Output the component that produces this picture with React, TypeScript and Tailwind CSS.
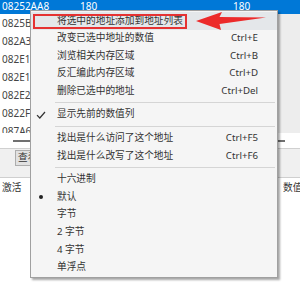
import React from 'react';

type Item =
  | { sep: true }
  | { sep?: false; label: string; keys?: string; active?: boolean; check?: boolean; radio?: boolean };

const items: Item[] = [
  { label: '将选中的地址添加到地址列表', active: true },
  { label: '改变已选中地址的数值', keys: 'Ctrl+E' },
  { label: '浏览相关内存区域', keys: 'Ctrl+B' },
  { label: '反汇编此内存区域', keys: 'Ctrl+D' },
  { label: '删除已选中的地址', keys: 'Ctrl+Del' },
  { sep: true },
  { label: '显示先前的数值列', check: true },
  { sep: true },
  { label: '找出是什么访问了这个地址', keys: 'Ctrl+F5' },
  { label: '找出是什么改写了这个地址', keys: 'Ctrl+F6' },
  { sep: true },
  { label: '十六进制' },
  { label: '默认', radio: true },
  { label: '字节' },
  { label: '2 字节' },
  { label: '4 字节' },
  { label: '单浮点' },
];

const rows = ['0825B9C0', '082A3F50', '082E1A08', '082E1A0C', '082E2B40', '0822F100', '087A6C48', '09A9D2E0'];

const ui = { fontFamily: '"Noto Sans", "Noto Sans CJK SC", sans-serif' };

export default function App() {
  return (
    <div className="relative w-[300px] h-[283px] overflow-hidden bg-white text-[#333]" style={ui}>
      {/* found addresses list */}
      <div className="h-[133px] overflow-hidden">
        <div className="-mt-[2px] text-[10px]">
          <div className="flex h-[16px] items-center bg-[#0078d7] text-white">
            <span className="pl-[2px] w-[80px]">08252AA8</span>
            <span className="w-[153px]">180</span>
            <span>180</span>
          </div>
          {rows.map((r) => (
            <div key={r} className="flex h-[18px] items-center">
              <span className="flex-1 pl-[2px] text-[#444]">{r}</span>
              <span className="w-[22px] h-full bg-[#ededed]" />
            </div>
          ))}
        </div>
      </div>

      {/* horizontal scrollbar */}
      <div className="h-[15px] pt-[7px]">
        <div className="ml-[13px] mr-[15px] h-[2px] bg-[#707070]" />
      </div>

      {/* button strip */}
      <div className="h-[29px] border-t border-[#d0d0d0] bg-[#f0f0f0] pt-[1px]">
        <div className="ml-[15px] w-[70px] h-[16px] overflow-hidden whitespace-nowrap border border-[#adadad] bg-[#e1e1e1] pl-[2px] text-[9.7px] leading-[14px]">
          查看内存
        </div>
      </div>

      {/* address list header */}
      <div className="flex h-[20px] items-center border-t border-[#cfcfcf] pt-[2px] text-[9.7px]">
        <span className="pl-[2px] flex-1 whitespace-nowrap">激活</span>
        <span className="w-[17px] overflow-hidden whitespace-nowrap">数值</span>
      </div>

      {/* context menu */}
      <div className="absolute left-[30px] top-[10px] w-[248px] border border-[#a0a0a0] bg-[#f5f5f5] py-[1px] shadow-[2px_2px_2px_rgba(0,0,0,0.35)] text-[9.7px] text-[#333]">
        {items.map((it, i) =>
          it.sep ? (
            <div key={i} className="my-[2.5px] ml-[24px] mr-[2px] h-px bg-[#d5d5d5]" />
          ) : (
            <div
              key={i}
              className={
                'flex h-[17.6px] items-center pr-[19px] ' + (it.active ? 'bg-[#e4e7ea]' : '')
              }
            >
              <span className="flex w-[19px] justify-center">
                {it.check && (
                  <svg width="10" height="8" viewBox="0 0 10 8">
                    <path d="M1 4.2 L3.8 7 L9 1" fill="none" stroke="#333" strokeWidth="1.2" />
                  </svg>
                )}
                {it.radio && <span className="block w-[4px] h-[4px] rounded-full bg-[#222]" />}
              </span>
              <span className="ml-[7px] flex-1 whitespace-nowrap">{it.label}</span>
              {it.keys && <span className="whitespace-nowrap">{it.keys}</span>}
            </div>
          )
        )}
      </div>

      {/* red annotation box and arrow */}
      <div className="absolute left-[33px] top-[14px] w-[154px] h-[15px] border-2 border-[#e53232]" />
      <svg className="absolute left-0 top-0" width="300" height="40" viewBox="0 0 300 40">
        <path d="M196 21 L222 12 L219.5 17 L266 17.5 L219.5 24 L221 30 Z" fill="#ec2a2a" />
      </svg>
    </div>
  );
}
